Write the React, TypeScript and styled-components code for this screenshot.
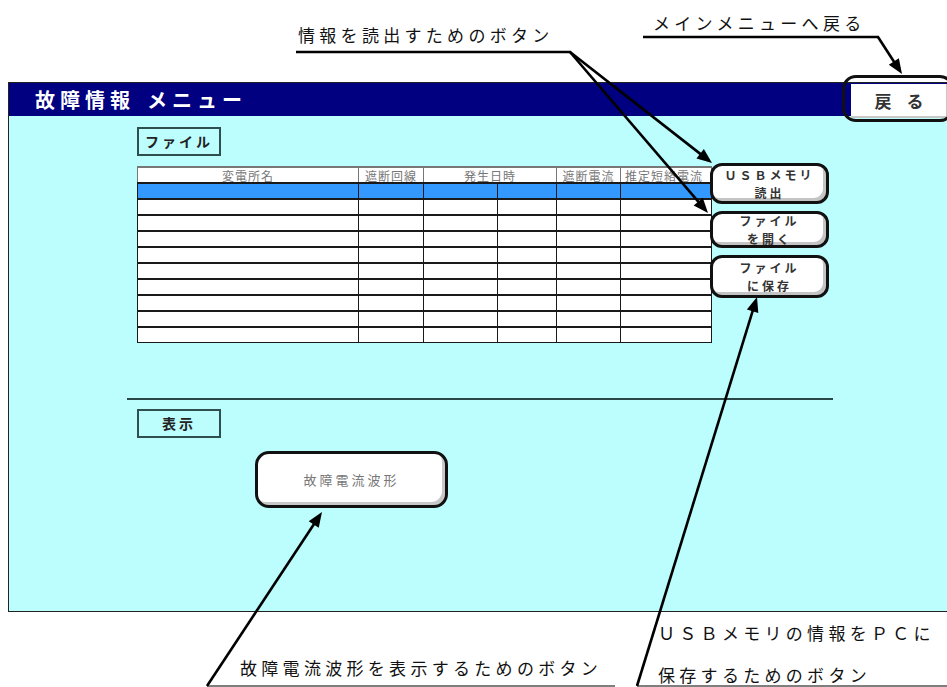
import styled, { createGlobalStyle } from "styled-components";

const GlobalStyle = createGlobalStyle`
  html, body {
    margin: 0;
    padding: 0;
    background: #fff;
  }
  body {
    font-family: "Noto Sans CJK JP", "Noto Sans", sans-serif;
  }
`;

const Page = styled.div`
    position: relative;
    width: 947px;
    height: 687px;
    overflow: hidden;
    background: #fff;
`;

const Panel = styled.div`
    margin: 82px 0 0 8px;
    width: 939px;
    border: 1px solid #222;
    border-right: none;
`;

const TitleBar = styled.div`
    display: flex;
    align-items: center;
    justify-content: space-between;
    height: 33px;
    padding-left: 26px;
    background: #000080;
`;

const Title = styled.div`
    display: flex;
    gap: 12px;
    color: #fff;
    font-size: 20px;
    font-weight: 700;
    letter-spacing: 5px;
    line-height: 33px;
`;

const BackButton = styled.div`
    position: relative;
    align-self: flex-start;
    margin-top: 1px;
    width: 97px;
    height: 34px;
    background: #fff;
    box-shadow: inset -2px -2px 0 #c8c8c8;
    color: #333;
    font-size: 17px;
    font-weight: 700;
    line-height: 34px;
    text-align: center;
    letter-spacing: 15px;
    padding-left: 14px;
    box-sizing: border-box;

    /* annotation ring around the button */
    &::after {
        content: "";
        position: absolute;
        top: -9px;
        left: -9px;
        right: -6px;
        bottom: -4px;
        border: 3px solid #111;
        border-radius: 14px;
    }
`;

const Body = styled.div`
    display: flex;
    flex-direction: column;
    align-items: flex-start;
    height: 495px;
    padding: 11px 0 0 128px;
    box-sizing: border-box;
    background: #bcfdfd;
`;

const SectionLabel = styled.div`
    width: 84px;
    height: 29px;
    box-sizing: border-box;
    border: 2px solid #2f4f4f;
    color: #222;
    font-size: 14px;
    font-weight: 700;
    line-height: 25px;
    text-align: center;
    letter-spacing: 3px;
`;

const FileRow = styled.div`
    display: flex;
    align-items: flex-start;
    margin-top: 7px;
    height: 169px;
`;

const Table = styled.table`
    margin-top: 3px;
    width: 574px;
    border-collapse: collapse;
    table-layout: fixed;
    background: #fff;
    border: 1px solid #666;

    td, th {
        height: 14px;
        padding: 0;
        border: 1px solid #1a1a1a;
        border-top-width: 2px;
        overflow: hidden;
        white-space: nowrap;
    }
`;

const HeadCell = styled.th<{ $left?: boolean }>`
    color: #777;
    font-size: 12px;
    font-weight: 400;
    line-height: 13px;
    letter-spacing: 1px;
    text-align: ${p => (p.$left ? "left" : "center")};
    padding-left: ${p => (p.$left ? "4px" : "0")} !important;
    border-color: #777 !important;
`;

const DataRow = styled.tr<{ $selected: boolean }>`
    background: ${p => (p.$selected ? "#3399ff" : "#fff")};
`;

const SideButtons = styled.div`
    display: flex;
    flex-direction: column;
    gap: 7px;
    margin-left: -2px;
`;

const SideButton = styled.div<{ $h: number }>`
    display: flex;
    flex-direction: column;
    align-items: center;
    justify-content: center;
    width: 119px;
    height: ${p => p.$h}px;
    box-sizing: border-box;
    border: 3px solid #111;
    border-radius: 12px;
    background: #fff;
    box-shadow: inset -3px -3px 0 #c4c4c4;
    color: #333;
    font-size: 12px;
    font-weight: 700;
    line-height: 17.5px;
    letter-spacing: 3px;
`;

const Separator = styled.div`
    margin: 66px 0 0 -10px;
    width: 706px;
    height: 2px;
    background: #2a4646;
`;

const ShowLabel = styled(SectionLabel)`
    margin-top: 9px;
`;

const WaveButton = styled.div`
    display: flex;
    align-items: center;
    justify-content: center;
    margin: 13px 0 0 118px;
    width: 193px;
    height: 57px;
    box-sizing: border-box;
    border: 3px solid #111;
    border-radius: 14px;
    background: #fff;
    box-shadow: inset -3px -3px 0 #c8c8c8;
    color: #777;
    font-size: 13px;
    letter-spacing: 3px;
`;

const Callout = styled.div<{ $x: number; $y: number; $lh?: number }>`
    position: absolute;
    left: ${p => p.$x}px;
    top: ${p => p.$y}px;
    color: #111;
    font-size: 17px;
    line-height: ${p => p.$lh ?? 20}px;
    letter-spacing: 4.3px;
    white-space: nowrap;
`;

const Overlay = styled.svg`
    position: absolute;
    left: 0;
    top: 0;
    pointer-events: none;
`;

type Pt = [number, number];

const pointers: { from: Pt; to: Pt }[] = [
    { from: [570, 52], to: [712, 163] },
    { from: [570, 52], to: [708, 213] },
    { from: [878, 37], to: [902, 74] },
    { from: [207, 686], to: [322, 512] },
    { from: [637, 686], to: [757, 297] },
];

const Pointer = ({ from, to }: { from: Pt; to: Pt }) => {
    const dx = to[0] - from[0];
    const dy = to[1] - from[1];
    const len = Math.hypot(dx, dy);
    const ux = dx / len;
    const uy = dy / len;
    const bx = to[0] - ux * 15;
    const by = to[1] - uy * 15;
    const head = [
        `${to[0]},${to[1]}`,
        `${bx - uy * 6},${by + ux * 6}`,
        `${bx + uy * 6},${by - ux * 6}`,
    ].join(" ");
    return (
        <g>
            <line x1={from[0]} y1={from[1]} x2={bx + ux * 3} y2={by + uy * 3} stroke="#000" strokeWidth={2.6} />
            <polygon points={head} fill="#000" />
        </g>
    );
};

const headers = ["変電所名", "遮断回線", "発生日時", "遮断電流", "推定短絡電流"];

export default function App() {
    const rows = Array.from({ length: 10 }, (_, i) => i);

    return (
        <Page>
            <GlobalStyle />
            <Panel>
                <TitleBar>
                    <Title>
                        <span>故障情報</span>
                        <span>メニュー</span>
                    </Title>
                    <BackButton>戻る</BackButton>
                </TitleBar>
                <Body>
                    <SectionLabel>ファイル</SectionLabel>
                    <FileRow>
                        <Table>
                            <colgroup>
                                <col style={{ width: 221 }} />
                                <col style={{ width: 65 }} />
                                <col style={{ width: 74 }} />
                                <col style={{ width: 59 }} />
                                <col style={{ width: 64 }} />
                                <col style={{ width: 91 }} />
                            </colgroup>
                            <tbody>
                                <tr>
                                    <HeadCell>{headers[0]}</HeadCell>
                                    <HeadCell>{headers[1]}</HeadCell>
                                    <HeadCell colSpan={2}>{headers[2]}</HeadCell>
                                    <HeadCell>{headers[3]}</HeadCell>
                                    <HeadCell $left>{headers[4]}</HeadCell>
                                </tr>
                                {rows.map(i => (
                                    <DataRow key={i} $selected={i === 0}>
                                        <td />
                                        <td />
                                        <td />
                                        <td />
                                        <td />
                                        <td />
                                    </DataRow>
                                ))}
                            </tbody>
                        </Table>
                        <SideButtons>
                            <SideButton $h={41}>
                                <span>ＵＳＢメモリ</span>
                                <span>読出</span>
                            </SideButton>
                            <SideButton $h={37}>
                                <span>ファイル</span>
                                <span>を開く</span>
                            </SideButton>
                            <SideButton $h={43}>
                                <span>ファイル</span>
                                <span>に保存</span>
                            </SideButton>
                        </SideButtons>
                    </FileRow>
                    <Separator />
                    <ShowLabel>表示</ShowLabel>
                    <WaveButton>故障電流波形</WaveButton>
                </Body>
            </Panel>

            <Callout $x={298} $y={25}>情報を読出すためのボタン</Callout>
            <Callout $x={653} $y={13}>メインメニューへ戻る</Callout>
            <Callout $x={240} $y={658}>故障電流波形を表示するためのボタン</Callout>
            <Callout $x={658} $y={612} $lh={42}>
                ＵＳＢメモリの情報をＰＣに
                <br />
                保存するためのボタン
            </Callout>

            <Overlay width={947} height={687} viewBox="0 0 947 687">
                <line x1={296} y1={52} x2={571} y2={52} stroke="#000" strokeWidth={2.6} />
                <line x1={643} y1={37} x2={879} y2={37} stroke="#000" strokeWidth={2.6} />
                <line x1={207} y1={686} x2={615} y2={686} stroke="#555" strokeWidth={1.5} />
                <line x1={637} y1={686} x2={947} y2={686} stroke="#555" strokeWidth={1.5} />
                {pointers.map((p, i) => (
                    <Pointer key={i} from={p.from} to={p.to} />
                ))}
            </Overlay>
        </Page>
    );
}
